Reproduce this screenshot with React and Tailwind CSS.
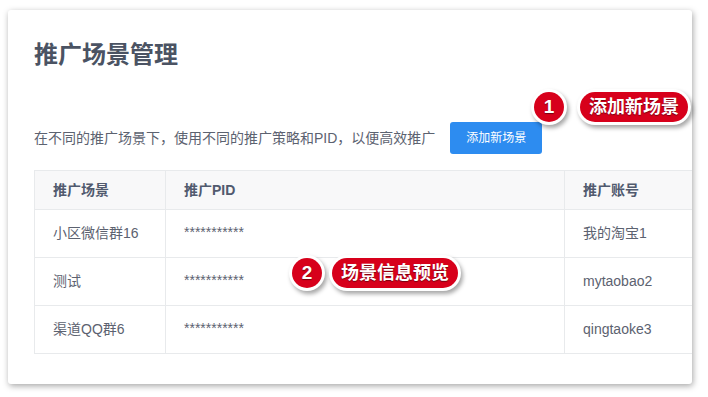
import React from "react";

const rows = [
  { scene: "小区微信群16", pid: "***********", account: "我的淘宝1" },
  { scene: "测试", pid: "***********", account: "mytaobao2" },
  { scene: "渠道QQ群6", pid: "***********", account: "qingtaoke3" },
];

function Callout({ num, label, className }) {
  return (
    <div className={"absolute flex items-center " + className}>
      <div className="w-[36px] h-[36px] rounded-full bg-white flex items-center justify-center shadow-[2px_3px_4px_rgba(0,0,0,0.35)]">
        <div className="w-[30px] h-[30px] rounded-full bg-[#d7001b] flex items-center justify-center text-white text-[19px] font-bold [text-shadow:0_1px_1px_rgba(0,0,0,0.45)]">
          {num}
        </div>
      </div>
      <div className="h-[36px] rounded-full bg-white flex items-center px-[3px] shadow-[2px_3px_4px_rgba(0,0,0,0.35)]">
        <div className="h-[30px] rounded-full bg-[#d7001b] flex items-center px-[9px] text-white text-[18px] font-bold [text-shadow:0_1px_1px_rgba(0,0,0,0.45)]">
          {label}
        </div>
      </div>
    </div>
  );
}

export default function App() {
  return (
    <div className="relative w-[708px] h-[397px] bg-white font-['Liberation_Sans','Noto_Sans_CJK_SC',sans-serif] overflow-hidden">
      <div className="absolute left-[8px] top-[10px] w-[684px] h-[374px] bg-white rounded-[3px] overflow-hidden shadow-[1px_2px_6px_rgba(0,0,0,0.35)]">
        <div className="pl-[26px] pt-[28px]">
          <h1 className="text-[24px] leading-[34px] font-bold text-[#4b5363]">推广场景管理</h1>
          <div className="mt-[50px] flex items-center gap-[15px]">
            <span className="text-[14px] text-[#5c6270]">
              在不同的推广场景下，使用不同的推广策略和PID，以便高效推广
            </span>
            <button className="w-[92px] h-[32px] rounded-[3px] bg-[#2d8cf0] text-white text-[12px]">
              添加新场景
            </button>
          </div>
          <table className="mt-[16px] w-[800px] border-collapse text-[14px] text-[#515a6e] table-fixed">
            <colgroup>
              <col className="w-[131px]" />
              <col className="w-[399px]" />
              <col className="w-[270px]" />
            </colgroup>
            <thead>
              <tr className="h-[39px] bg-[#f8f8f9]">
                <th className="border border-[#e8eaec] text-left font-bold pl-[18px]">推广场景</th>
                <th className="border border-[#e8eaec] text-left font-bold pl-[18px]">推广PID</th>
                <th className="border border-[#e8eaec] text-left font-bold pl-[18px]">推广账号</th>
              </tr>
            </thead>
            <tbody>
              {rows.map((r) => (
                <tr key={r.scene} className="h-[48px]">
                  <td className="border border-[#e8eaec] pl-[18px] text-[#5c6270]">{r.scene}</td>
                  <td className="border border-[#e8eaec] pl-[18px] text-[#5c6270] pb-[2px]">{r.pid}</td>
                  <td className="border border-[#e8eaec] pl-[18px] text-[#5c6270]">{r.account}</td>
                </tr>
              ))}
            </tbody>
          </table>
        </div>
      </div>
      <Callout num="1" label="添加新场景" className="left-[531px] top-[89px] gap-[10px]" />
      <Callout num="2" label="场景信息预览" className="left-[289px] top-[255px] gap-[4px]" />
    </div>
  );
}
